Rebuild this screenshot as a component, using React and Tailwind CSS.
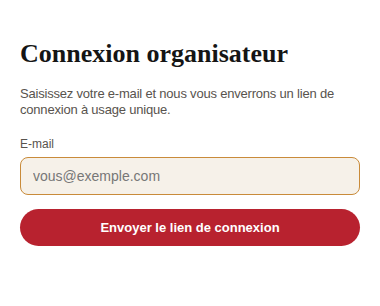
import React from 'react';

const App = () => {
  return (
    <div className="min-h-screen bg-white px-5 pt-[38px]" style={{ fontFamily: '"Liberation Sans", Arial, sans-serif' }}>
      <h1 className="text-[26px] leading-[32px] font-bold text-[#151515]" style={{ fontFamily: '"Liberation Serif", "Times New Roman", serif' }}>
        Connexion organisateur
      </h1>
      <p className="mt-[16px] text-[13px] leading-[16px] tracking-[-0.2px] text-[#58534e]">
        Saisissez votre e-mail et nous vous enverrons un lien de connexion à usage unique.
      </p>

      <form className="mt-[19px]" onSubmit={(e) => e.preventDefault()}>
        <label className="block text-[12px] leading-[14px] text-[#58534e] mb-[6px]">E-mail</label>
        <input
          type="email"
          placeholder="vous@exemple.com"
          className="block w-full h-[38px] rounded-[8px] border border-[#c98b3a] bg-[#f6f1e9] px-3 text-[14px] text-[#333] placeholder:text-[#777] outline-none"
        />
        <button
          type="submit"
          className="block mt-[14px] w-full h-[37px] rounded-full bg-[#b8222f] text-white text-[13px] font-bold"
        >
          Envoyer le lien de connexion
        </button>
      </form>
    </div>
  );
};

export default App;
